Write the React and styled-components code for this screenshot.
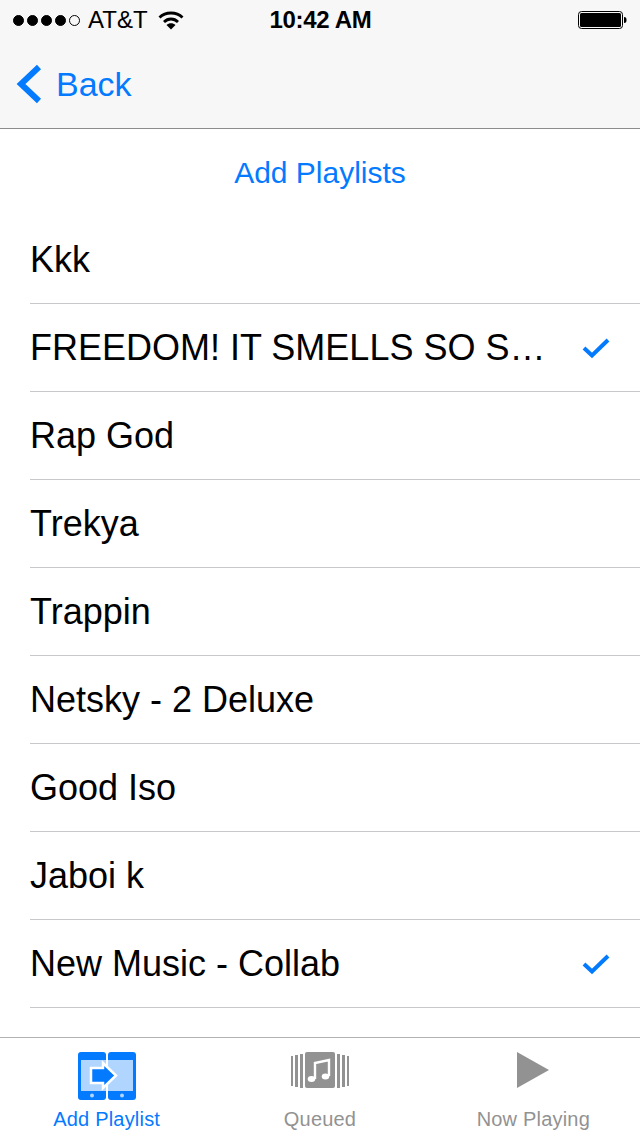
import React from 'react';
import styled, { createGlobalStyle } from 'styled-components';

const GlobalStyle = createGlobalStyle`
  html, body {
    margin: 0;
    padding: 0;
    background: #fff;
    font-family: "Liberation Sans", Arial, sans-serif;
  }
`;

const Screen = styled.div`
  width: 640px;
  height: 1136px;
  display: flex;
  flex-direction: column;
  overflow: hidden;
  background: #fff;
`;

const Header = styled.header`
  flex: none;
  height: 128px;
  background: #f7f7f7;
  border-bottom: 1px solid #8c8c8c;
`;

const StatusBar = styled.div`
  height: 40px;
  display: flex;
  align-items: center;
  padding: 0 12px 0 13px;
  color: #000;
`;

const StatusLeft = styled.div`
  flex: 1;
  display: flex;
  align-items: center;
`;

const Signal = styled.div`
  display: flex;
  gap: 3px;
  margin-right: 8px;
`;

const Dot = styled.span`
  width: 11px;
  height: 11px;
  box-sizing: border-box;
  border-radius: 50%;
  background: ${p => (p.$empty ? 'transparent' : '#000')};
  border: 1px solid #000;
`;

const Carrier = styled.span`
  font-size: 24px;
  margin-right: 10px;
`;

const Clock = styled.div`
  flex: none;
  font-size: 24px;
  font-weight: bold;
  letter-spacing: -0.3px;
`;

const StatusRight = styled.div`
  flex: 1;
  display: flex;
  justify-content: flex-end;
`;

const NavBar = styled.nav`
  height: 88px;
  display: flex;
  align-items: center;
  padding-left: 16px;
  gap: 14px;
  color: #047aff;
`;

const BackLabel = styled.span`
  font-size: 34px;
`;

const Title = styled.h1`
  flex: none;
  height: 87px;
  margin: 0;
  display: flex;
  align-items: center;
  justify-content: center;
  font-size: 30px;
  font-weight: normal;
  color: #047aff;
`;

const List = styled.ul`
  flex: 1;
  list-style: none;
  margin: 0;
  padding: 0 0 0 30px;
`;

const Row = styled.li`
  box-sizing: border-box;
  height: 88px;
  display: flex;
  align-items: center;
  border-bottom: 1px solid #c8c7cc;
  padding-right: 30px;
`;

const RowLabel = styled.span`
  flex: 1;
  min-width: 0;
  font-size: 36px;
  color: #000;
  white-space: nowrap;
`;

const TabBar = styled.footer`
  flex: none;
  height: 98px;
  display: flex;
  border-top: 1px solid #b2b2b2;
  background: #fff;
`;

const Tab = styled.div`
  width: 213.33px;
  display: flex;
  flex-direction: column;
  align-items: center;
  color: ${p => (p.$active ? '#047aff' : '#929292')};
`;

const TabIcon = styled.div`
  height: 60px;
  padding-top: 14px;
  box-sizing: border-box;
  display: flex;
  align-items: flex-start;
  justify-content: center;
`;

const TabLabel = styled.span`
  margin-top: 10px;
  font-size: 20px;
  letter-spacing: 0.2px;
`;

const playlists = [
  { name: 'Kkk' },
  { name: 'FREEDOM! IT SMELLS SO S…', checked: true },
  { name: 'Rap God' },
  { name: 'Trekya' },
  { name: 'Trappin' },
  { name: 'Netsky - 2 Deluxe' },
  { name: 'Good Iso' },
  { name: 'Jaboi k' },
  { name: 'New Music - Collab', checked: true },
];

const WifiIcon = () => (
  <svg width="26" height="20" viewBox="0 0 26 20">
    <path d="M1.5 7.5 C7.5 1.5 18.5 1.5 24.5 7.5" fill="none" stroke="#000" strokeWidth="2.8" />
    <path d="M6 12 C10 8 16 8 20 12" fill="none" stroke="#000" strokeWidth="2.8" />
    <path d="M13 19.5 L8.5 15 C11 12.6 15 12.6 17.5 15 Z" fill="#000" />
  </svg>
);

const BatteryIcon = () => (
  <svg width="50" height="20" viewBox="0 0 50 20">
    <rect x="0.5" y="1.5" width="44" height="17" rx="3" fill="none" stroke="#000" />
    <rect x="2" y="3" width="41" height="14" rx="1.5" fill="#000" />
    <path d="M46 7 C48 7 48.5 8 48.5 10 C48.5 12 48 13 46 13 Z" fill="#000" />
  </svg>
);

const BackChevron = () => (
  <svg width="26" height="40" viewBox="0 0 26 40">
    <path d="M23 3 L5 20 L23 37" fill="none" stroke="#047aff" strokeWidth="6" />
  </svg>
);

const Check = () => (
  <svg width="28" height="22" viewBox="0 0 28 22">
    <path d="M2 11 L10 18.5 L26 3" fill="none" stroke="#047aff" strokeWidth="4" />
  </svg>
);

const AddPlaylistIcon = () => (
  <svg width="58" height="48" viewBox="0 0 58 48">
    <rect x="0" y="0" width="28" height="48" rx="3" fill="#047aff" />
    <rect x="30" y="0" width="28" height="48" rx="3" fill="#047aff" />
    <rect x="3" y="8" width="25" height="31" fill="#b0d5ff" />
    <rect x="30" y="8" width="25" height="31" fill="#b0d5ff" />
    <circle cx="14" cy="43.5" r="2" fill="#b0d5ff" />
    <circle cx="44" cy="43.5" r="2" fill="#b0d5ff" />
    <path d="M16 16 H28 V11 L41 23.5 L28 36 V31 H16 Z" transform="translate(-3 0)" fill="#047aff" stroke="#fff" strokeWidth="2.5" />
  </svg>
);

const QueuedIcon = () => (
  <svg width="58" height="38" viewBox="0 0 58 38">
    <rect x="0" y="4" width="2" height="30" fill="#929292" />
    <rect x="4" y="3" width="3" height="32" fill="#929292" />
    <rect x="9" y="2" width="3" height="34" fill="#929292" />
    <rect x="14" y="0" width="30" height="36" rx="2" fill="#929292" />
    <rect x="46" y="2" width="3" height="34" fill="#929292" />
    <rect x="51" y="3" width="3" height="32" fill="#929292" />
    <rect x="56" y="4" width="2" height="30" fill="#929292" />
    <path d="M24 27 V11 L38 8 V24" fill="none" stroke="#fff" strokeWidth="2.4" />
    <ellipse cx="20.5" cy="27" rx="3.8" ry="3" fill="#fff" />
    <ellipse cx="34.5" cy="24.5" rx="3.8" ry="3" fill="#fff" />
  </svg>
);

const PlayIcon = () => (
  <svg width="34" height="36" viewBox="0 0 34 36">
    <path d="M1 0 L33 18 L1 36 Z" fill="#929292" />
  </svg>
);

export default function App() {
  return (
    <Screen>
      <GlobalStyle />
      <Header>
        <StatusBar>
          <StatusLeft>
            <Signal>
              <Dot /><Dot /><Dot /><Dot /><Dot $empty />
            </Signal>
            <Carrier>AT&amp;T</Carrier>
            <WifiIcon />
          </StatusLeft>
          <Clock>10:42 AM</Clock>
          <StatusRight>
            <BatteryIcon />
          </StatusRight>
        </StatusBar>
        <NavBar>
          <BackChevron />
          <BackLabel>Back</BackLabel>
        </NavBar>
      </Header>
      <Title>Add Playlists</Title>
      <List>
        {playlists.map(item => (
          <Row key={item.name}>
            <RowLabel>{item.name}</RowLabel>
            {item.checked && <Check />}
          </Row>
        ))}
      </List>
      <TabBar>
        <Tab $active>
          <TabIcon><AddPlaylistIcon /></TabIcon>
          <TabLabel>Add Playlist</TabLabel>
        </Tab>
        <Tab>
          <TabIcon><QueuedIcon /></TabIcon>
          <TabLabel>Queued</TabLabel>
        </Tab>
        <Tab>
          <TabIcon><PlayIcon /></TabIcon>
          <TabLabel>Now Playing</TabLabel>
        </Tab>
      </TabBar>
    </Screen>
  );
}
